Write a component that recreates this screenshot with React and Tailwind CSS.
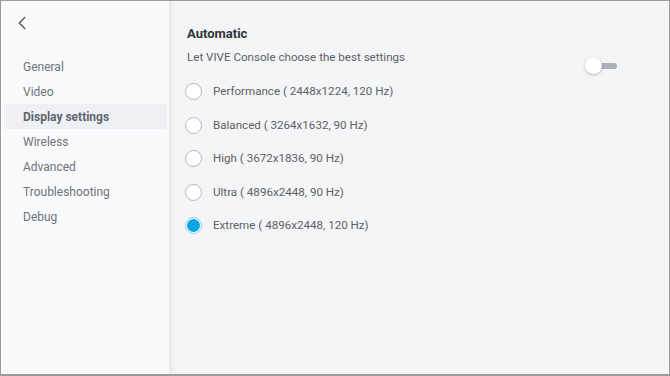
import { ChevronLeft } from "lucide-react";

const navItems = [
  "General",
  "Video",
  "Display settings",
  "Wireless",
  "Advanced",
  "Troubleshooting",
  "Debug",
];

const presets = [
  "Performance ( 2448x1224, 120 Hz)",
  "Balanced ( 3264x1632, 90 Hz)",
  "High ( 3672x1836, 90 Hz)",
  "Ultra ( 4896x2448, 90 Hz)",
  "Extreme ( 4896x2448, 120 Hz)",
];

export default function App() {
  const selected = 4;

  return (
    <div className="w-[670px] h-[376px] overflow-hidden border border-b-2 border-[#9c9c9c] bg-[#f4f5f7] font-['Roboto',sans-serif] flex">
      {/* Sidebar */}
      <aside className="w-[168px] shrink-0 bg-[#f9fafb] shadow-[2px_0_6px_rgba(0,0,0,0.08)] z-10 pt-[11px]">
        <div className="pl-[10px] h-[22px] flex items-center text-[#555]">
          <ChevronLeft size={22} strokeWidth={1.5} />
        </div>
        <ul className="mt-[20px]">
          {navItems.map((item) => (
            <li
              key={item}
              className={`h-[25px] ml-[3px] mr-[2px] pl-[19px] flex items-center text-[12px] ${
                item === "Display settings"
                  ? "bg-[#eef0f3] font-bold text-[#5f6670]"
                  : "text-[#6e747c]"
              }`}
            >
              {item}
            </li>
          ))}
        </ul>
      </aside>

      {/* Main */}
      <main className="flex-1 pl-[18px] pt-[24px] pr-[50px]">
        <h2 className="text-[13px] font-bold text-[#2f343a] leading-[18px]">
          Automatic
        </h2>
        <div className="flex items-start justify-between mt-[6px]">
          <p className="text-[11.6px] text-[#5c6168] leading-[16px]">
            Let VIVE Console choose the best settings
          </p>
          <div className="relative mt-[8px] w-[34px] h-[17px] flex items-center">
            <div className="ml-[8px] w-[24px] h-[6px] rounded-full bg-[#a9b3c0]" />
            <div className="absolute left-0 top-0 w-[17px] h-[17px] rounded-full bg-white shadow-[0_1px_3px_rgba(0,0,0,0.25)]" />
          </div>
        </div>
        <ul className="mt-[1px] flex flex-col">
          {presets.map((p, i) => (
            <li key={p} className="h-[33.5px] flex items-center gap-[11px] -ml-[2px]">
              {i === selected ? (
                <span className="w-[17px] h-[17px] rounded-full border border-[#7fd0f0] bg-white flex items-center justify-center">
                  <span className="w-[13px] h-[13px] rounded-full bg-[#0ba5e3]" />
                </span>
              ) : (
                <span className="w-[17px] h-[17px] rounded-full border border-[#b4b8bd] bg-white" />
              )}
              <span className="text-[11.6px] text-[#5c6168]">{p}</span>
            </li>
          ))}
        </ul>
      </main>
    </div>
  );
}
